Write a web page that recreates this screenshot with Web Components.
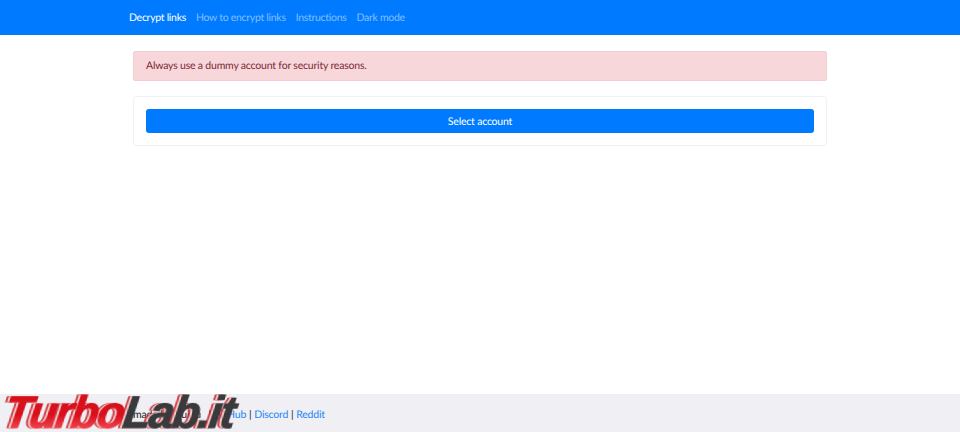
<!DOCTYPE html>
<html lang="en">
<head>
<meta charset="utf-8">
<title>Decrypt links</title>
<style>
html, body { margin: 0; height: 100%; }
body {
	color: #212529;
	display: flex;
	flex-direction: column;
	font: 10.5px/15px Lato, "Open Sans", sans-serif;
	height: 432px;
	letter-spacing: -.2px;
	overflow: hidden;
	position: relative;
	text-rendering: geometricPrecision;
}
page-footer span { margin-right: 5px; }
</style>
</head>
<body>
<top-nav>
	<nav-link active>Decrypt links</nav-link>
	<nav-link>How to encrypt links</nav-link>
	<nav-link>Instructions</nav-link>
	<nav-link>Dark mode</nav-link>
</top-nav>
<main-box>
	<alert-box>Always use a dummy account for security reasons.</alert-box>
	<card-box><big-button>Select account</big-button></card-box>
</main-box>
<page-footer>
	<span>made by Nuitiu</span> | <a>GitHub</a> | <a>Discord</a> | <a>Reddit</a>
</page-footer>
<site-mark></site-mark>
<script>
class BaseElement extends HTMLElement {
	constructor(markup) {
		super();
		this.attachShadow({mode: "open"});
		this.shadowRoot.innerHTML = markup;
	}
}

class TopNav extends BaseElement {
	constructor() {
		super(`<style>
			:host { background: #007bff; display: flex; flex: none; gap: 10px; height: 35px; align-items: center; letter-spacing: -.29px; padding-left: 129px; }
		</style><slot></slot>`);
	}
}

class NavLink extends BaseElement {
	constructor() {
		super(`<style>
			:host { color: rgba(255, 255, 255, .5); display: block; padding-top: 2px; }
			:host([active]) { color: #fff; }
		</style><slot></slot>`);
	}
}

class MainBox extends BaseElement {
	constructor() {
		super(`<style>
			:host { display: flex; flex: 1; flex-direction: column; gap: 15px; padding: 16px 133px 0; }
		</style><slot></slot>`);
	}
}

class AlertBox extends BaseElement {
	constructor() {
		super(`<style>
			:host { background: #f8d7da; border: 1px solid #f5ccd2; border-radius: 2px; color: #7a2a35; display: block; padding: 7px 12px 6px; }
		</style><slot></slot>`);
	}
}

class CardBox extends BaseElement {
	constructor() {
		super(`<style>
			:host { border: 1px solid rgba(0, 0, 0, .05); border-radius: 3px; display: block; padding: 12px; }
		</style><slot></slot>`);
	}
}

class BigButton extends BaseElement {
	constructor() {
		super(`<style>
			:host { background: #007bff; border-radius: 3px; box-sizing: border-box; color: #fff; display: block; height: 24px; line-height: 24px; padding-top: 1px; text-align: center; }
		</style><slot></slot>`);
	}
}

class PageFooter extends BaseElement {
	constructor() {
		super(`<style>
			:host { background: #efeff4; box-sizing: border-box; color: #212529; display: block; flex: none; height: 38px; line-height: 42px; padding-left: 133px; word-spacing: .3px; }
			::slotted(a) { color: #1f87f5; }
		</style><slot></slot>`);
	}
}

class SiteMark extends BaseElement {
	constructor() {
		super(`<style>
			:host { bottom: 0; display: block; filter: drop-shadow(-2px 0 0 rgba(255, 255, 255, .8)) drop-shadow(-2px 0 0 #c8141c) blur(.4px); font: italic 700 45px/38px "Liberation Sans", sans-serif; left: 5px; letter-spacing: -1.6px; position: absolute; transform: skewX(-8deg); white-space: nowrap; word-spacing: 0; -webkit-text-stroke: 1.2px currentColor; }
			.turbo { color: #b5101a; }
			.turbo b { background: linear-gradient(#d8101c 55%, #f0404a 80%, #a80d14); -webkit-background-clip: text; background-clip: text; color: transparent; font-weight: inherit; }
			.lab { color: #3a3a3c; }
		</style><span class="turbo"><b>Turbo</b></span><span class="lab">Lab.it</span>`);
	}
}

customElements.define("top-nav", TopNav);
customElements.define("nav-link", NavLink);
customElements.define("main-box", MainBox);
customElements.define("alert-box", AlertBox);
customElements.define("card-box", CardBox);
customElements.define("big-button", BigButton);
customElements.define("page-footer", PageFooter);
customElements.define("site-mark", SiteMark);
</script>
</body>
</html>
